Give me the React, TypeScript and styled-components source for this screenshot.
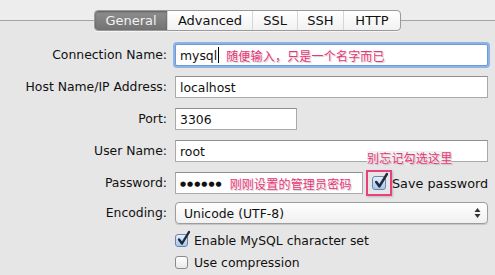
import React from 'react'
import styled, { createGlobalStyle } from 'styled-components'

const GlobalStyle = createGlobalStyle`
  html, body {
    margin: 0;
    padding: 0;
    background: #e6e6e6;
  }
  body {
    font-family: 'DejaVu Sans', 'Noto Sans CJK SC', sans-serif;
    font-size: 12.4px;
    color: #111;
  }
`

const Window = styled.div`
  width: 495px;
  height: 275px;
  overflow: hidden;
  background: #e6e6e6;
`

const Header = styled.header`
  display: flex;
  align-items: center;
  padding-top: 10px;
  background: linear-gradient(#ededed 0, #ededed 20px, #e6e6e6 20px);
`

const Rule = styled.div`
  flex: 1;
  height: 1px;
  background: #a3a3a3;
`

const Tabs = styled.nav`
  display: flex;
  height: 21px;
  box-sizing: border-box;
  border: 1px solid #9a9a9a;
  border-radius: 4px;
  overflow: hidden;
  background: linear-gradient(#ffffff, #f1f1f1);
  box-shadow: 0 1px 0 rgba(255, 255, 255, 0.6);
`

const Tab = styled.div<{ active?: boolean; w: number }>`
  width: ${p => p.w}px;
  display: flex;
  align-items: center;
  justify-content: center;
  font-size: 13px;
  color: ${p => (p.active ? '#f2f2f2' : '#111')};
  background: ${p => (p.active ? 'linear-gradient(#8e8e8e, #737373)' : 'transparent')};
  box-shadow: ${p => (p.active ? 'inset 0 1px 2px rgba(0,0,0,0.35)' : 'none')};
  & + & {
    border-left: 1px solid ${p => (p.active ? '#777' : '#d6d6d6')};
  }
`

const Form = styled.div`
  display: grid;
  grid-template-columns: 167px 1fr;
  column-gap: 8px;
  padding: 13px 15px 0 0;
`

const Label = styled.div<{ top?: number }>`
  text-align: right;
  height: 22px;
  line-height: 22px;
  margin-top: ${p => p.top ?? 10}px;
  white-space: nowrap;
`

const Cell = styled.div<{ top?: number }>`
  display: flex;
  align-items: center;
  height: 22px;
  margin-top: ${p => p.top ?? 10}px;
  position: relative;
  white-space: nowrap;
`

const Field = styled.div<{ focused?: boolean; w?: number }>`
  box-sizing: border-box;
  flex: none;
  height: 22px;
  width: ${p => (p.w ? `${p.w}px` : '100%')};
  display: flex;
  align-items: center;
  padding-left: 4px;
  background: #fff;
  border: 1px solid ${p => (p.focused ? '#6d9bd6' : '#a9a9a9')};
  border-top-color: ${p => (p.focused ? '#6d9bd6' : '#8f8f8f')};
  box-shadow: ${p => (p.focused ? '0 0 0 2px #8db4e6' : 'none')};
  border-radius: ${p => (p.focused ? '2px' : '0')};
  white-space: nowrap;
`

const Caret = styled.span`
  display: inline-block;
  width: 1px;
  height: 16px;
  background: #000;
  margin-left: 1px;
`

const Note = styled.span`
  font-family: 'Noto Sans CJK SC', sans-serif;
  font-size: 12px;
  color: #ea3477;
  text-shadow: 0 0 2px #fff, 1px 1px 1px rgba(0, 0, 0, 0.25);
  margin-left: 7px;
  letter-spacing: 0.2px;
  white-space: nowrap;
`

const FloatNote = styled(Note)`
  position: absolute;
  left: -1px;
  bottom: 29px;
  margin: 0;
  line-height: 14px;
  background: rgba(236, 236, 236, 0.7);
`

const Dots = styled.span`
  font-size: 7px;
  letter-spacing: 1px;
  padding-top: 1px;
`

const Marked = styled.span`
  position: relative;
  flex: none;
  display: flex;
  align-items: center;
  justify-content: center;
  box-sizing: border-box;
  width: 26px;
  height: 26px;
  margin: -2px 0 -2px 3px;
  border: 2px solid #e8407e;
  box-shadow: 1px 1px 2px rgba(0, 0, 0, 0.2);
`

const Box = styled.span<{ size: number }>`
  position: relative;
  display: inline-block;
  flex: none;
  width: ${p => p.size}px;
  height: ${p => p.size}px;
  box-sizing: border-box;
  border: 1px solid #8a8a8a;
  border-radius: 3px;
  background: linear-gradient(#ffffff, #e9e9e9);
`

const CheckedBox = styled(Box)`
  border-color: #6a86a8;
  background: linear-gradient(#e4eefb, #a9c6ec);
`

const Tick = styled.svg`
  position: absolute;
  left: 1px;
  top: -4px;
  overflow: visible;
`

const Option = styled.div<{ top?: number }>`
  display: flex;
  align-items: center;
  gap: 6px;
  height: 18px;
  margin-top: ${p => p.top ?? 4}px;
`

const SaveLabel = styled.span`
  flex: none;
  margin-left: 0;
  font-size: 12.8px;
`

const Select = styled.div`
  box-sizing: border-box;
  width: 100%;
  height: 22px;
  display: flex;
  align-items: center;
  justify-content: space-between;
  padding: 0 6px 0 8px;
  border: 1px solid #9d9d9d;
  border-radius: 4px;
  background: linear-gradient(#ffffff, #f0f0f0);
  box-shadow: 0 1px 1px rgba(0, 0, 0, 0.15);
`

function Check({ checked, size = 13 }: { checked?: boolean; size?: number }) {
  if (!checked) return <Box size={size} />
  return (
    <CheckedBox size={size}>
      <Tick width={size} height={size + 2} viewBox="0 0 13 15">
        <path
          d="M2 8.5 L5 12.5 L12 1"
          fill="none"
          stroke="#1d2a3a"
          strokeWidth="2.4"
          strokeLinecap="round"
          strokeLinejoin="round"
        />
      </Tick>
    </CheckedBox>
  )
}

function Arrows() {
  return (
    <svg width="7" height="12" viewBox="0 0 7 12">
      <path d="M3.5 1 L6.5 5 L0.5 5 Z" fill="#333" />
      <path d="M3.5 11 L6.5 7 L0.5 7 Z" fill="#333" />
    </svg>
  )
}

const tabs = [
  { name: 'General', w: 72 },
  { name: 'Advanced', w: 84 },
  { name: 'SSL', w: 44 },
  { name: 'SSH', w: 45 },
  { name: 'HTTP', w: 56 },
]

export default function App() {
  return (
    <>
      <GlobalStyle />
      <Window>
        <Header>
          <Rule style={{ maxWidth: 95 }} />
          <Tabs>
            {tabs.map((t, i) => (
              <Tab key={t.name} w={t.w} active={i === 0}>
                {t.name}
              </Tab>
            ))}
          </Tabs>
          <Rule />
        </Header>

        <Form>
          <Label top={0}>Connection Name:</Label>
          <Cell top={0}>
            <Field focused>
              mysql
              <Caret />
              <Note>随便输入，只是一个名字而已</Note>
            </Field>
          </Cell>

          <Label>Host Name/IP Address:</Label>
          <Cell>
            <Field>localhost</Field>
          </Cell>

          <Label>Port:</Label>
          <Cell>
            <Field w={122}>3306</Field>
          </Cell>

          <Label>User Name:</Label>
          <Cell>
            <Field>root</Field>
          </Cell>

          <Label>Password:</Label>
          <Cell>
            <Field w={188}>
              <Dots>●●●●●●</Dots>
              <Note>刚刚设置的管理员密码</Note>
            </Field>
            <Marked>
              <FloatNote>别忘记勾选这里</FloatNote>
              <Check checked size={14} />
            </Marked>
            <SaveLabel>Save password</SaveLabel>
          </Cell>

          <Label top={8}>Encoding:</Label>
          <Cell top={8}>
            <Select>
              <span>Unicode (UTF-8)</span>
              <Arrows />
            </Select>
          </Cell>

          <div />
          <div>
            <Option top={7}>
              <Check checked />
              <span>Enable MySQL character set</span>
            </Option>
            <Option>
              <Check />
              <span>Use compression</span>
            </Option>
          </div>
        </Form>
      </Window>
    </>
  )
}
